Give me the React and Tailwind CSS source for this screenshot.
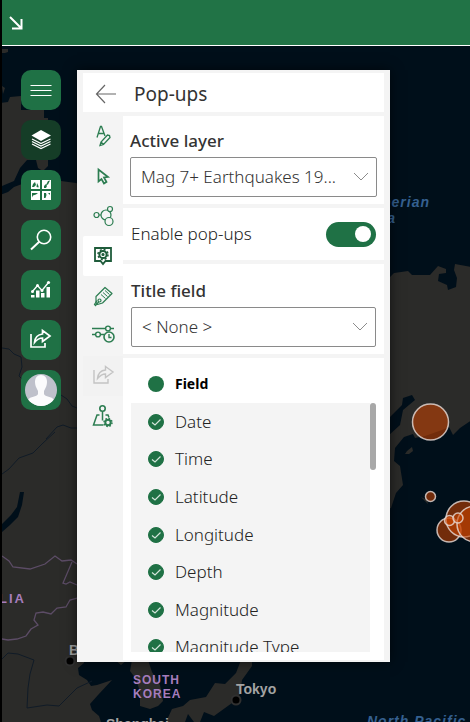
import { useState } from 'react';

const fields = ['Date', 'Time', 'Latitude', 'Longitude', 'Depth', 'Magnitude', 'Magnitude Type'];

const quakes = [
  { x: 430.5, y: 422, r: 18 },
  { x: 430.5, y: 496.5, r: 5 },
  { x: 449, y: 530, r: 12 },
  { x: 464, y: 519, r: 18 },
  { x: 475, y: 524, r: 18 },
  { x: 449.5, y: 520.5, r: 5 },
  { x: 458, y: 518, r: 5 },
];

function MapBackground() {
  return (
    <svg
      className="absolute inset-0 h-full w-full bg-[#000f1a]"
      viewBox="0 0 470 722"
      preserveAspectRatio="xMinYMin slice"
      aria-hidden="true"
    >
      <g fill="#2b2b29">
        <path d="M0 103L8 102 10 97 21 96 21 110 44 110 44 118 48 118 49 160 27 160 20 168 14 181 2 186 0 187z" />
        <path d="M36 160L48 160 48 166 43 171 38 168z" />
        <path d="M0 195L8 192 14 187 22 184 61 181 76 183 84 186 84 663 78 668 79 675 87 680 91 686 97 685 112 680 98 695 90 704 92 710 99 716 101 722 0 722z" />
        <path d="M2 49h6v3l-3 1H2zM2 86l3 2-2 6zM5 117h3v3H5z" />
        <path d="M388 279L394 273 408 271 412 275 430 275 438 266 446 269 446 273 439 274 438 281 447 285 448 290 456 287 457 278 454 270 455 264 472 267 472 420 460 428 453 435 449 427 442 430 425 436 415 438 413 434 404 437 395 448 394 461 400 466 403 485 396 493 391 508 388 509 388 436 400 425 403 410 415 400 412 395 403 398 402 405 388 419z" />
        <path d="M407 451l5-4 1 4-4 3h-4zM421 497l6 3 1 4z" />
        <path d="M132 660L130 671 136 679 140 692 140 706 150 709 158 706 163 701 160 685 152 672 148 660zM241 660L236 673 225 684 215 683 206 697 190 700 183 706 172 709 166 722 185 722 188 714 194 722 200 722 204 712 214 716 232 703 240 694 242 680 252 666 252 660zM115 660L127 660 121 665z" />
      </g>

      <g fill="none" stroke="#101b27" strokeWidth="1">
        <path d="M2 348l7 1 5 5 7 3 1 10-3 9 10 10M61 395l6 4 5 7 5 2M46 439l11-12 6-2 8 3h6M2 474l7-5 10-11 14-5 10-10 12-11M2 659l6-6 10 1 16 6-4 14-2 14-1 20 20-3 12 1 18-18 15-7" />
      </g>
      <path d="M20 492h4l-2 13-4 12-8 8-8 7v-8l9-9 6-8z" fill="#000f1a" />
      <g fill="none" stroke="#5c4c66" strokeWidth="1.3">
        <path d="M2 556l7 5 4 6 17 2 15-5 10-8 7 5 9-1 6 4M72 562l-9 21 3 1 4-2 7 3M77 598l-7 2-4 7-9 1-6 6-8-2-7 1-2 7 4 5-7 4-5 7-9 3-9 1-6-1" />
      </g>

      <g fontFamily='"Liberation Sans", sans-serif' fontWeight="700">
        <g fill="#356090" fontSize="14" fontStyle="italic" letterSpacing="1">
          <text x="430" y="207" textAnchor="end">Siberian</text>
          <text x="396" y="223" textAnchor="end">Sea</text>
          <text x="367" y="726">North Pacific</text>
        </g>
        <g fill="#a67dbd" fontSize="12" letterSpacing="1">
          <text x="-1" y="603" fontSize="13" letterSpacing="2">LIA</text>
          <text x="133" y="684">SOUTH</text>
          <text x="133" y="698">KOREA</text>
        </g>
        <g fill="#a3a3a3" fontSize="14">
          <text x="69" y="655">Beijing</text>
          <text x="236" y="694">Tokyo</text>
          <text x="106" y="729">Shanghai</text>
        </g>
      </g>
      <g fill="#000" stroke="#303030" strokeWidth="2">
        <circle cx="70" cy="661" r="4.5" />
        <circle cx="236" cy="700" r="4.5" />
      </g>

      {quakes.map((quake) => (
        <circle
          key={`${quake.x}-${quake.y}`}
          cx={quake.x}
          cy={quake.y}
          r={quake.r}
          fill="#cc4400"
          fillOpacity="0.56"
          stroke="#e8ddda"
          strokeOpacity="0.8"
          strokeWidth="1.5"
        />
      ))}
    </svg>
  );
}

function Icon({ children, viewBox = '0 0 24 24' }) {
  return (
    <svg width="24" height="24" viewBox={viewBox} fill="none" stroke="currentColor" strokeWidth="1.2" aria-hidden="true">
      {children}
    </svg>
  );
}

const sharePath = 'M3 6v13h14v-4M14.5 2.5l7.5 5.5-7.5 5.5v-3.5c-3 0-5.5 1.5-8 4.5 .5-5 3-8 8-8.5z';

const tools = [
  { name: 'Menu', icon: <path d="M2.5 7.5h21M2.5 12.500h21M2.5 17.500h21" strokeWidth="1.2" /> },
  {
    name: 'Layers',
    active: true,
    icon: (
      <>
        <path d="M13 2l10 5.5-10 5.5-9.5-5.5z" fill="currentColor" stroke="none" />
        <path d="M4 11l9 4.5 9.5-4.5M4 13.5l9 4.5 9.5-4.5M4 16l9 4.500 9.5-4.5" />
      </>
    ),
  },
  {
    name: 'Basemap',
    icon: (
      <>
        <path d="M3 2h9v9H3zM14 2h9v9h-9zM3 13h9v9H3zM14 13h9v9h-9z" fill="currentColor" stroke="none" />
        <path
          d="M5 6l2-2 1 3-2 2H4zM9 5l1.5 3v1.5L8.5 9zM20 3l2-.5-2 4-2 .5zM16 8l2-2 1 2-1 2h-2zM4 15h6l-2 1.5-3 1-1 2zM16 15h2l.5 2-1 3h-1.5zM20 15h2v2z"
          fill="#1f7145"
          stroke="none"
        />
      </>
    ),
  },
  {
    name: 'Search',
    icon: (
      <>
        <circle cx="16" cy="9" r="6.7" strokeWidth="1.6" />
        <path d="M11.5 13.5L3 21.5" strokeWidth="2" />
      </>
    ),
  },
  {
    name: 'Charts',
    icon: (
      <>
        <path d="M4 14l5.5-6.5 4.5 5 6.5-8" strokeWidth="1.4" />
        <path
          d="M3 17h3.5v2.5H3zM8 12.5h3.5v7H8zM13 15h3.5v4.5H13zM18.5 9H22v10.5h-3.5z"
          fill="currentColor"
          stroke="none"
        />
        <g fill="currentColor" stroke="none">
          <circle cx="4.5" cy="13.5" r="1.5" />
          <circle cx="9.5" cy="7.5" r="1.5" />
          <circle cx="14" cy="12.5" r="1.5" />
          <circle cx="20.5" cy="4.5" r="1.6" />
        </g>
      </>
    ),
  },
  { name: 'Share map', icon: <path d={sharePath} strokeWidth="1.7" /> },
];

const tabs = [
  {
    name: 'Style',
    icon: (
      <>
        <path d="M6 13.5L9.5 2.5h1L14 12M7.5 9.5h5.500" strokeWidth="1.3" />
        <path d="M9 21.5l1-3.5 6.5-7 2 .5 .5 2-6.5 7zM10 18l2.5 2.5" strokeWidth="1.3" />
      </>
    ),
  },
  {
    name: 'Selection',
    icon: <path d="M7.5 5.500v12l3-2.500 2.500 4.500 2.500-1.500-2.500-4.500 4-.5z" strokeWidth="1.7" />,
  },
  {
    name: 'Clustering',
    icon: (
      <>
        <circle cx="15" cy="11" r="5" />
        <circle cx="5.5" cy="11" r="2.5" />
        <circle cx="19" cy="5" r="2.5" fill="#f4f4f4" />
        <circle cx="18" cy="17.5" r="4" fill="#f4f4f4" />
        <path d="M8 11h2" />
      </>
    ),
  },
  {
    name: 'Pop-ups',
    active: true,
    icon: (
      <>
        <path d="M4 4h16v13h-5.5l-2.5 3-2.5-3H4z" strokeWidth="1.8" />
        <circle cx="12" cy="10.5" r="3.6" strokeWidth="2" />
        <circle cx="12" cy="10.5" r="5" strokeWidth="1.5" strokeDasharray="2 1.927" />
        <circle cx="12" cy="10.5" r="1" fill="currentColor" />
      </>
    ),
  },
  {
    name: 'Labels',
    icon: (
      <>
        <path d="M5 12.5l9-9 7 6-9.5 9.5-5 1.5-1.5-2z" strokeLinejoin="round" />
        <path d="M10 10.5l4.5 4M12 8.5l4.5 4M14 6.5l4.5 4" strokeWidth="1" />
        <circle cx="8.5" cy="16.5" r="1.5" />
        <path d="M8 17.5l-3.500 4-1-1 2.500-4" />
      </>
    ),
  },
  {
    name: 'Time filter',
    icon: (
      <>
        <path d="M1 4.5h13.5M19.5 4.5H23M1 10.5h3.5M9 10.5h4" strokeWidth="1.7" />
        <circle cx="17" cy="4.5" r="2.4" strokeWidth="1.4" />
        <circle cx="7" cy="10.5" r="2.4" strokeWidth="1.4" />
        <circle cx="18" cy="13" r="5" fill="#f4f4f4" strokeWidth="1.6" />
        <path d="M18 10v3.5h2.5" strokeWidth="1.4" />
      </>
    ),
  },
  { name: 'Share layer', disabled: true, icon: <path d={sharePath} strokeWidth="1.4" /> },
  {
    name: 'Location settings',
    icon: (
      <>
        <circle cx="11.5" cy="4.500" r="2.7" strokeWidth="1.6" />
        <path d="M11.5 7.5v9M8.5 11H6L2.5 21h10M14.5 11H17l1 2.5" strokeWidth="1.5" />
        <circle cx="17" cy="18.5" r="2.7" strokeWidth="2" />
        <circle cx="17" cy="18.5" r="4" strokeWidth="1.5" strokeDasharray="1.6 1.541" />
      </>
    ),
  },
];

function Toolbar() {
  return (
    <nav className="flex flex-none flex-col gap-[10px]" aria-label="Map tools">
      {tools.map((tool) => (
        <button
          key={tool.name}
          type="button"
          aria-label={tool.name}
          className={`grid h-10 w-10 place-items-center rounded-[10px] text-white ${tool.active ? 'bg-[#153d27]' : 'bg-[#1f7145]'}`}
        >
          <Icon viewBox="1 0 24 24">{tool.icon}</Icon>
        </button>
      ))}
      <button type="button" aria-label="Account" className="grid h-10 w-10 place-items-center rounded-[10px] bg-[#1f7145]">
        <svg className="h-8 w-8 rounded-full bg-[#bfc1cb]" viewBox="0 0 32 32" aria-hidden="true">
          <path d="M16 1c-4 0-6 3-6 7 0 3 1 5 2 7l1 2v3c-1 3-8 2-10 6v6h26v-6c-2-4-9-3-10-6v-3l1-2c1-2 2-4 2-7 0-4-2-7-6-7z" fill="#fbfbfc" />
        </svg>
      </button>
    </nav>
  );
}

function SelectField({ id, label, value }) {
  return (
    <div className="flex flex-col">
      <label htmlFor={id} className="text-[17px] leading-6 font-medium text-[#333]">
        {label}
      </label>
      <div className="relative mt-1">
        <select
          id={id}
          className="h-10 w-full appearance-none rounded-[2px] border border-[#8a8a8a] bg-white pr-8 pl-[10px] text-[17px] font-light text-[#333]"
        >
          <option>{value}</option>
        </select>
        <svg className="pointer-events-none absolute top-3 right-2 h-4 w-4" viewBox="0 0 16 16" fill="none" stroke="#8c8c8c" aria-hidden="true">
          <path d="M1 4l7 7 7-7" />
        </svg>
      </div>
    </div>
  );
}

function FieldList() {
  return (
    <section className="bg-white px-2 pb-2">
      <div className="flex h-[45px] items-center gap-[11px] pt-[7px] pl-[17px]">
        <span className="h-4 w-4 rounded-full bg-[#1f7145]" />
        <h2 className="text-sm font-bold text-black">Field</h2>
      </div>
      <div className="flex h-[249px]">
        <div className="min-w-0 flex-1 overflow-hidden bg-[#f4f4f4]">
          <ul className="flex h-[263px] flex-col">
            {fields.map((field) => (
              <li key={field} className="flex flex-1 items-center pl-[17px]">
                <label className="flex items-center gap-[11px] text-[17px] leading-6 font-light text-[#222]">
                  <span className="relative grid h-4 w-4 place-items-center">
                    <input type="checkbox" defaultChecked className="peer h-4 w-4 appearance-none rounded-full border border-[#1f7145] checked:bg-[#1f7145]" />
                    <svg className="pointer-events-none absolute inset-0 hidden peer-checked:block" viewBox="0 0 16 16" fill="none" stroke="#d5e5dc" strokeWidth="1.2" aria-hidden="true">
                      <path d="M4 8.5l3 2.5 5.5-5.5" />
                    </svg>
                  </span>
                  {field}
                </label>
              </li>
            ))}
          </ul>
        </div>
        <div className="w-[6px] flex-none">
          <div className="h-[67px] rounded-full bg-[#a8a8a8]" />
        </div>
      </div>
    </section>
  );
}

function PopupPanel() {
  const [enabled, setEnabled] = useState(true);

  return (
    <main className="min-w-0 max-w-[313px] flex-1 bg-[#f4f4f4] pt-[3px] pr-[6px] pb-[2px] pl-[6px] shadow-[0_0_12px_rgba(0,0,0,0.6)]">
      <header className="flex h-[39px] items-center gap-[17px] bg-white pt-[3px] pl-3">
        <button type="button" aria-label="Back" className="text-[#666]">
          <svg width="22" height="20" viewBox="0 0 22 20" fill="none" stroke="currentColor" strokeWidth="1.2" aria-hidden="true">
            <path d="M10 1L1.5 10l8.5 9M1.5 10H21" />
          </svg>
        </button>
        <h1 className="text-[19px] leading-6 text-[#333]">Pop-ups</h1>
      </header>

      <div className="mt-1 flex">
        <nav className="flex w-10 flex-none flex-col" aria-label="Layer settings">
          {tabs.map((tab) => (
            <button
              key={tab.name}
              type="button"
              aria-label={tab.name}
              disabled={tab.disabled}
              className={`grid h-10 place-items-center ${tab.active ? 'rounded-l-[2px] bg-white text-[#1f5c3b]' : tab.disabled ? 'bg-[#f2f2f2] text-[#c4c4c4]' : 'text-[#2c7d51]'}`}
            >
              <Icon>{tab.icon}</Icon>
            </button>
          ))}
        </nav>

        <div className="flex min-w-0 flex-1 flex-col gap-1">
          <section className="bg-white px-[7px] pt-[13px] pb-[7px]">
            <SelectField id="active-layer" label="Active layer" value="Mag 7+ Earthquakes 19..." />
          </section>

          <section className="flex h-[52px] items-center justify-between bg-white px-2">
            <label htmlFor="enable-popups" className="text-[17px] leading-6 font-light text-[#222]">
              Enable pop-ups
            </label>
            <button
              id="enable-popups"
              type="button"
              role="switch"
              aria-checked={enabled}
              onClick={() => setEnabled(!enabled)}
              className={`flex h-[25px] w-[50px] items-center rounded-full px-[5px] ${enabled ? 'justify-end bg-[#1f7145]' : 'justify-start bg-[#8a8a8a]'}`}
            >
              <span className="h-4 w-4 rounded-full bg-white" />
            </button>
          </section>

          <section className="bg-white px-2 pt-[15px] pb-[7px]">
            <SelectField id="title-field" label="Title field" value="< None >" />
          </section>

          <FieldList />
        </div>
      </div>
    </main>
  );
}

export default function App() {
  return (
    <div className="relative flex min-h-screen flex-col overflow-hidden border-l-2 border-black font-['Noto_Sans',sans-serif]">
      <div className="absolute inset-y-0 right-0 -left-[2px]">
        <MapBackground />
      </div>
      <div className="relative flex h-[46px] items-center border-b border-white bg-[#217346] px-[7px]">
        <button type="button" aria-label="Collapse" className="text-white">
          <svg width="14" height="14" viewBox="0 0 14 14" fill="none" stroke="currentColor" strokeWidth="2" aria-hidden="true">
            <path d="M1 1l11 11M12.5 3v9.5H3" />
          </svg>
        </button>
      </div>
      <div className="relative flex items-start gap-4 pt-6 pl-[19px]">
        <Toolbar />
        <PopupPanel />
      </div>
    </div>
  );
}
